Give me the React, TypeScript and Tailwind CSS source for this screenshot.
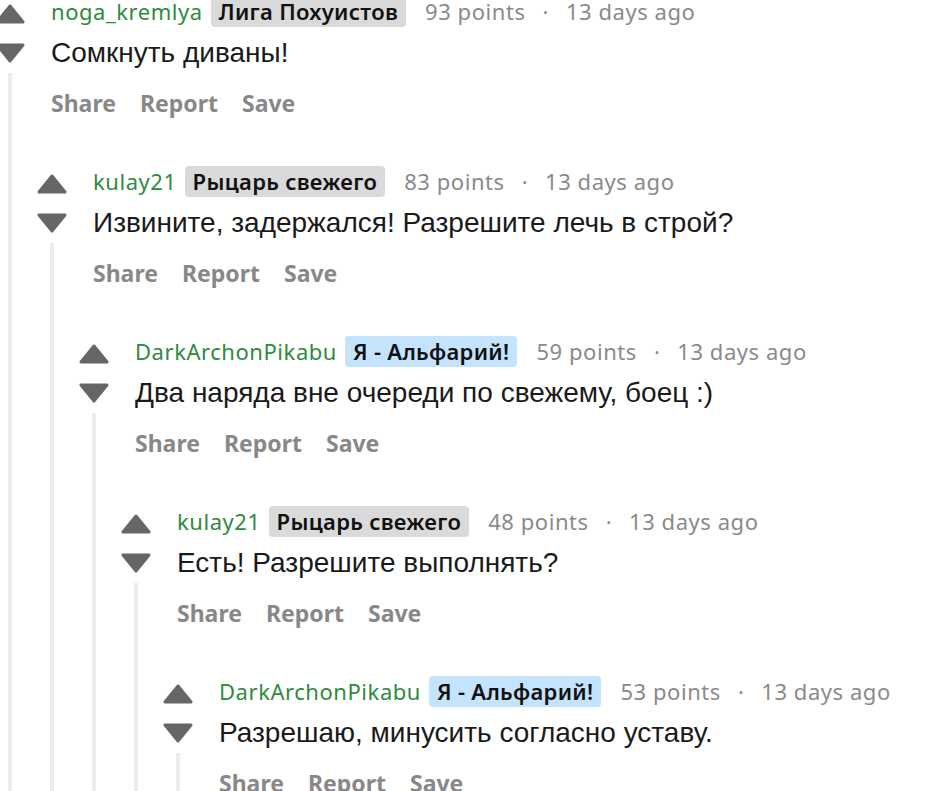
type Comment = {
  user: string
  tag: string
  blue?: boolean
  points: number
  text: string
}

const thread: Comment[] = [
  { user: "noga_kremlya", tag: "Лига Похуистов", points: 93, text: "Сомкнуть диваны!" },
  { user: "kulay21", tag: "Рыцарь свежего", points: 83, text: "Извините, задержался! Разрешите лечь в строй?" },
  { user: "DarkArchonPikabu", tag: "Я - Альфарий!", blue: true, points: 59, text: "Два наряда вне очереди по свежему, боец :)" },
  { user: "kulay21", tag: "Рыцарь свежего", points: 48, text: "Есть! Разрешите выполнять?" },
  { user: "DarkArchonPikabu", tag: "Я - Альфарий!", blue: true, points: 53, text: "Разрешаю, минусить согласно уставу." },
]

const Arrow = ({ down }: { down?: boolean }) => (
  <svg width="32" height="20" viewBox="0 0 32 20" className="shrink-0">
    <polygon
      points={down ? "3,2 29,2 16,18" : "16,2 29,18 3,18"}
      fill="#666666"
      stroke="#666666"
      strokeWidth="3"
      strokeLinejoin="round"
    />
  </svg>
)

const meta = "font-['Noto_Sans',sans-serif] text-[22px] tracking-[0.55px]"

const CommentNode = ({ index }: { index: number }) => {
  const c = thread[index]
  return (
    <div className="flex">
      {/* votes + thread line */}
      <div className="w-[20px] shrink-0 flex flex-col items-center">
        <div className="h-[41px] flex items-center justify-center pt-[5px]">
          <Arrow />
        </div>
        <div className="h-[41px] flex items-center justify-center">
          <Arrow down />
        </div>
        <div className="w-[4px] flex-1 bg-[#ececec]" />
      </div>

      <div className="flex-1 min-w-0">
        <div className={`h-[41px] flex items-center pl-[31px] whitespace-nowrap ${meta}`}>
          <span className="text-[#2e8b3d]">{c.user}</span>
          <span
            className={`ml-[8px] px-[8px] rounded-[4px] font-semibold text-[#111] leading-[31px] tracking-[0.3px] ${
              c.blue ? "bg-[#c4e3fc]" : "bg-[#dadada]"
            }`}
          >
            {c.tag}
          </span>
          <span className="ml-[19px] text-[#8a8a8a]">{c.points} points</span>
          <span className="mx-[17px] text-[#8a8a8a]">·</span>
          <span className="text-[#8a8a8a]">13 days ago</span>
        </div>
        <div className="h-[41px] flex items-center pl-[31px] font-['Liberation_Sans',Arial,sans-serif] text-[28px] text-[#1a1a1a] whitespace-nowrap">
          {c.text}
        </div>
        <div className="h-[60px] flex items-center gap-[24px] pl-[31px] font-['Noto_Sans',sans-serif] font-bold text-[23px] text-[#888888]">
          <span>Share</span>
          <span>Report</span>
          <span>Save</span>
        </div>
        {index + 1 < thread.length && (
          <div className="mt-[28px] ml-[22px]">
            <CommentNode index={index + 1} />
          </div>
        )}
        {index + 1 >= thread.length && <div className="h-[60px]" />}
      </div>
    </div>
  )
}

export default function App() {
  return (
    <div className="w-[940px] h-[791px] overflow-hidden bg-white">
      <div className="-mt-[9px]">
        <CommentNode index={0} />
      </div>
    </div>
  )
}
